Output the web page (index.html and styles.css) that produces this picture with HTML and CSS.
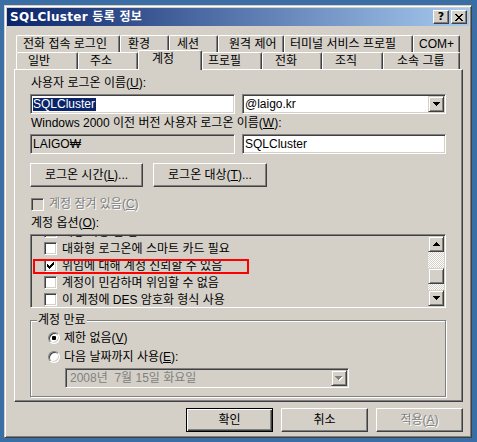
FILE: index.html
```html
<!DOCTYPE html>
<html lang="ko">
<head>
<meta charset="utf-8">
<title>SQLCluster 등록 정보</title>
<link rel="stylesheet" href="styles.css">
</head>
<body>
<div class="window">
  <div class="titlebar">
    <span class="title">SQLCluster 등록 정보</span>
    <div class="caption-btns">
      <span class="cbtn help">?</span>
      <span class="cbtn close">
        <svg class="px" width="8" height="7" viewBox="0 0 8 7"><path d="M0 0h2v1H0zM6 0h2v1H6zM1 1h2v1H1zM5 1h2v1H5zM2 2h4v1H2zM3 3h2v1H3zM2 4h4v1H2zM1 5h2v1H1zM5 5h2v1H5zM0 6h2v1H0zM6 6h2v1H6z"/></svg>
      </span>
    </div>
  </div>
  <div class="client">
    <div class="tabs">
      <div class="tabrow">
        <div class="tab w104 p7">전화 접속 로그인</div>
        <div class="tab w49 p8">환경</div>
        <div class="tab w49 p8">세션</div>
        <div class="tab w66 p11">원격 제어</div>
        <div class="tab w129 p6">터미널 서비스 프로필</div>
        <div class="tab w47 p6">COM+</div>
      </div>
      <div class="tabrow">
        <div class="tab w62 p12">일반</div>
        <div class="tab w60 p12">주소</div>
        <div class="tab w64 p14 selected">계정</div>
        <div class="tab w60 p6">프로필</div>
        <div class="tab w60 p13">전화</div>
        <div class="tab w61 p13">조직</div>
        <div class="tab w77 p14">소속 그룹</div>
      </div>
    </div>

    <div class="panel">
      <div class="label l1">사용자 로그온 이름(<u>U</u>):</div>
      <div class="pair r1">
        <div class="edit"><span class="selection">SQLCluster</span></div>
        <div class="edit combo">
          <span class="value">@laigo.kr</span>
          <span class="sbtn dropbtn"><svg class="px" width="7" height="4" viewBox="0 0 7 4"><path d="M0 0h7v1H0zM1 1h5v1H1zM2 2h3v1H2zM3 3h1v1H3z"/></svg></span>
        </div>
      </div>
      <div class="label l2">Windows 2000 이전 버전 사용자 로그온 이름(<u>W</u>):</div>
      <div class="pair r2">
        <div class="edit readonly">LAIGO₩</div>
        <div class="edit">SQLCluster</div>
      </div>
      <div class="btnrow">
        <div class="button b1">로그온 시간(<u>L</u>)...</div>
        <div class="button b2">로그온 대상(<u>T</u>)...</div>
      </div>
      <div class="check disabled">
        <span class="box"></span>
        <span class="dim">계정 잠겨 있음(<u>C</u>)</span>
      </div>
      <div class="label l3">계정 옵션(<u>O</u>):</div>
      <div class="listbox">
        <div class="items">
          <div class="items-inner">
            <div class="item"><span class="box"></span><span>계정 사용 안 함</span></div>
            <div class="item"><span class="box"></span><span>대화형 로그온에 스마트 카드 필요</span></div>
            <div class="item"><span class="box"><svg class="px" width="7" height="7" viewBox="0 0 7 7"><path d="M6 0h1v1H6zM5 1h2v1H5zM0 2h1v1H0zM4 2h3v1H4zM0 3h2v1H0zM3 3h3v1H3zM0 4h5v1H0zM1 5h3v1H1zM2 6h1v1H2z"/></svg></span><span>위임에 대해 계정 신뢰할 수 있음</span></div>
            <div class="item"><span class="box"></span><span>계정이 민감하며 위임할 수 없음</span></div>
            <div class="item"><span class="box"></span><span>이 계정에 DES 암호화 형식 사용</span></div>
          </div>
        </div>
        <div class="vscroll">
          <span class="sbtn"><svg class="px" width="7" height="4" viewBox="0 0 7 4"><path d="M3 0h1v1H3zM2 1h3v1H2zM1 2h5v1H1zM0 3h7v1H0z"/></svg></span>
          <div class="track">
            <div class="dither d1"></div>
            <div class="sbtn thumb"></div>
            <div class="dither d2"></div>
          </div>
          <span class="sbtn"><svg class="px" width="7" height="4" viewBox="0 0 7 4"><path d="M0 0h7v1H0zM1 1h5v1H1zM2 2h3v1H2zM3 3h1v1H3z"/></svg></span>
        </div>
        <div class="annot"></div>
      </div>

      <div class="group">
        <div class="gtitle">계정 만료</div>
        <div class="radio-row rr1"><span class="radio"><span class="dot"></span></span><span>제한 없음(<u>V</u>)</span></div>
        <div class="radio-row rr2"><span class="radio"></span><span>다음 날짜까지 사용(<u>E</u>):</span></div>
        <div class="date">
          <span class="datetext">2008년  7월 15일 화요일</span>
          <span class="sbtn dropbtn"><svg class="px" width="8" height="5" viewBox="0 0 8 5"><path fill="#fff" d="M1 1h7v1H1zM2 2h5v1H2zM3 3h3v1H3zM4 4h1v1H4z"/><path fill="#808080" d="M0 0h7v1H0zM1 1h5v1H1zM2 2h3v1H2zM3 3h1v1H3z"/></svg></span>
        </div>
      </div>
    </div>

    <div class="footer">
      <div class="button fbtn default">확인</div>
      <div class="button fbtn">취소</div>
      <div class="button fbtn"><span class="dim">적용(<u>A</u>)</span></div>
    </div>
  </div>
</div>
</body>
</html>
```
FILE: styles.css
```css
* { box-sizing: border-box; }
html, body { margin: 0; }
body {
  width: 477px;
  height: 442px;
  overflow: hidden;
  padding: 5px 0 0 4px;
  background: #3a6ea5;
  font: 12px/14px "Liberation Sans", "Noto Sans CJK KR", sans-serif;
  color: #000;
}
u { text-decoration: underline; text-underline-offset: 1px; }
.px { display: block; shape-rendering: crispEdges; }

.window {
  width: 468px;
  height: 433px;
  display: flex;
  flex-direction: column;
  padding: 2px;
  background: #d4d0c8;
  border: 1px solid;
  border-color: #d4d0c8 #404040 #404040 #d4d0c8;
  box-shadow: inset 1px 1px #fff, inset -1px -1px #808080;
}

/* title bar */
.titlebar {
  height: 18px;
  flex: none;
  display: flex;
  align-items: center;
  justify-content: space-between;
  padding: 0 2px 0 3px;
  background: linear-gradient(to right, #0a246a, #a6caf0);
}
.title {
  color: #fff;
  font-weight: bold;
  font-family: "DejaVu Sans", "Noto Sans CJK KR", sans-serif;
  font-size: 12px;
  line-height: 18px;
  letter-spacing: 0.3px;
  white-space: nowrap;
}
.caption-btns { display: flex; gap: 2px; }
.cbtn {
  width: 16px;
  height: 14px;
  display: flex;
  align-items: center;
  justify-content: center;
  background: #d4d0c8;
  border: 1px solid;
  border-color: #fff #404040 #404040 #fff;
  box-shadow: inset -1px -1px #808080;
}
.help { font: bold 11px/12px "DejaVu Sans", sans-serif; }

/* client */
.client {
  flex: 1;
  display: flex;
  flex-direction: column;
  padding: 9px 6px 0 7px;
}

/* tabs */
.tabs { flex: none; padding-left: 2px; }
.tabrow { display: flex; height: 17px; }
.tab {
  flex: none;
  height: 17px;
  line-height: 16px;
  white-space: nowrap;
  background: #d4d0c8;
  border-top: 1px solid #fff;
  border-left: 1px solid #fff;
  border-right: 1px solid #404040;
  border-radius: 2px 2px 0 0;
  box-shadow: inset -1px 0 #808080;
}
.tab.selected {
  height: 20px;
  margin-top: -2px;
  position: relative;
  z-index: 1;
}
.w47 { width: 47px; } .w49 { width: 49px; } .w60 { width: 60px; } .w61 { width: 61px; }
.w62 { width: 62px; } .w64 { width: 64px; } .w66 { width: 66px; } .w77 { width: 77px; }
.w104 { width: 104px; } .w129 { width: 129px; }
.p6 { padding-left: 5px; } .p7 { padding-left: 6px; } .p8 { padding-left: 7px; }
.p11 { padding-left: 10px; } .p12 { padding-left: 11px; } .p13 { padding-left: 12px; }
.p14 { padding-left: 13px; }

/* panel */
.panel {
  flex: none;
  width: 449px;
  height: 333px;
  display: flex;
  flex-direction: column;
  padding: 0 16px 0 15px;
  border: 1px solid;
  border-color: #fff #404040 #404040 #fff;
  box-shadow: inset -1px -1px #808080;
}
.label { padding-left: 1px; white-space: nowrap; height: 14px; }
.l1 { margin-top: 6px; }
.l2 { margin-top: 2px; }
.l3 { margin-top: 5px; }

.pair {
  display: grid;
  grid-template-columns: 205px 204px;
  column-gap: 7px;
  height: 20px;
}
.r1, .r2 { margin-top: 4px; }

.edit {
  height: 20px;
  display: flex;
  align-items: center;
  padding: 0 1px 0 2px;
  background: #fff;
  border: 1px solid;
  border-color: #808080 #fff #fff #808080;
  box-shadow: inset 1px 1px #404040, inset -1px -1px #d4d0c8;
  white-space: nowrap;
  overflow: hidden;
}
.edit.readonly { background: #d4d0c8; }
.selection {
  display: inline-block;
  height: 13px;
  line-height: 13px;
  padding: 0 1px 0 0;
  background: #0a246a;
  color: #fff;
}
.combo { padding-right: 1px; }
.combo .value { flex: 1; }

.sbtn {
  width: 16px;
  height: 16px;
  flex: none;
  display: flex;
  align-items: center;
  justify-content: center;
  background: #d4d0c8;
  border: 1px solid;
  border-color: #d4d0c8 #404040 #404040 #d4d0c8;
  box-shadow: inset 1px 1px #fff, inset -1px -1px #808080;
}
.dropbtn { margin-left: auto; }

.btnrow { display: flex; gap: 10px; margin-top: 9px; }
.button {
  height: 24px;
  display: flex;
  align-items: center;
  justify-content: center;
  white-space: nowrap;
  background: #d4d0c8;
  border: 1px solid;
  border-color: #fff #404040 #404040 #fff;
  box-shadow: inset -1px -1px #808080;
}
.b1 { width: 113px; }
.b2 { width: 114px; }

.check {
  display: flex;
  align-items: center;
  gap: 5px;
  height: 14px;
  margin-top: 10px;
  margin-left: 1px;
  white-space: nowrap;
}
.box {
  width: 13px;
  height: 13px;
  flex: none;
  display: flex;
  align-items: center;
  justify-content: center;
  background: #fff;
  border: 1px solid;
  border-color: #808080 #fff #fff #808080;
  box-shadow: inset 1px 1px #404040, inset -1px -1px #d4d0c8;
}
.check.disabled .box { background: #d4d0c8; }
.dim { color: #808080; text-shadow: 1px 1px #fff; }

/* list box */
.listbox {
  position: relative;
  height: 74px;
  margin-top: 4px;
  display: flex;
  padding: 1px;
  background: #d4d0c8;
  border: 1px solid;
  border-color: #808080 #fff #fff #808080;
  box-shadow: inset 1px 1px #404040;
}
.items { flex: 1; overflow: hidden; }
.items-inner { margin-top: -13px; }
.item {
  height: 17px;
  display: flex;
  align-items: center;
  gap: 5px;
  padding-left: 12px;
  white-space: nowrap;
}
.vscroll { width: 16px; flex: none; display: flex; flex-direction: column; }
.track { flex: 1; display: flex; flex-direction: column; }
.dither { background: repeating-conic-gradient(#fff 0 25%, #d4d0c8 0 50%) 0 0 / 2px 2px; }
.d1 { height: 16px; flex: none; }
.d2 { flex: 1; }
.annot {
  position: absolute;
  left: 2px;
  top: 24px;
  width: 216px;
  height: 15px;
  border: 2px solid #f00;
}

/* group box */
.group {
  height: 77px;
  margin-top: 12px;
  display: flex;
  flex-direction: column;
  align-items: flex-start;
  padding-left: 6px;
  border: 1px solid #808080;
  box-shadow: inset 1px 1px #fff, 1px 1px #fff;
}
.gtitle {
  margin-top: -8px;
  padding: 0 1px;
  height: 14px;
  background: #d4d0c8;
  white-space: nowrap;
}
.radio-row {
  display: flex;
  align-items: center;
  gap: 4px;
  height: 14px;
  margin-left: 11px;
  white-space: nowrap;
}
.rr1 { margin-top: 4px; }
.rr2 { margin-top: 5px; }
.radio {
  width: 12px;
  height: 12px;
  flex: none;
  display: flex;
  align-items: center;
  justify-content: center;
  border-radius: 50%;
  background: #fff;
  border: 1px solid;
  border-color: #808080 #fff #fff #808080;
  box-shadow: inset 1px 1px #404040, inset -1px -1px #d4d0c8;
}
.dot { width: 4px; height: 4px; border-radius: 1px; background: #000; }
.date {
  width: 284px;
  height: 20px;
  margin-top: 4px;
  margin-left: 28px;
  display: flex;
  align-items: center;
  padding: 0 1px 0 4px;
  color: #808080;
  background: #d4d0c8;
  border: 1px solid;
  border-color: #808080 #fff #fff #808080;
  box-shadow: inset 1px 1px #404040, inset -1px -1px #d4d0c8;
}
.datetext { white-space: pre; }

/* footer */
.footer {
  display: flex;
  justify-content: flex-end;
  gap: 8px;
  margin-top: 6px;
}
.fbtn { width: 87px; }
.default {
  border-color: #000;
  box-shadow: inset 1px 1px #fff, inset -1px -1px #404040, inset -2px -2px #808080;
}
```
